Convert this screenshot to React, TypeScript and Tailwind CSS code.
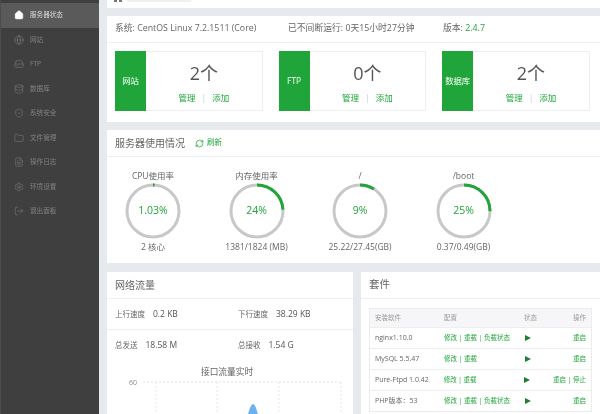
import React from 'react'
import { Home, Globe, HardDrive, Database, ShieldCheck, Folder, FileText, Settings, LogOut, RefreshCw } from 'lucide-react'

const font = 'font-["Open_Sans","Noto_Sans_CJK_SC",sans-serif]'

const MENU = [
  { label: '服务器状态', icon: Home, active: true },
  { label: '网站', icon: Globe },
  { label: 'FTP', icon: HardDrive },
  { label: '数据库', icon: Database },
  { label: '系统安全', icon: ShieldCheck },
  { label: '文件管理', icon: Folder },
  { label: '操作日志', icon: FileText },
  { label: '环境设置', icon: Settings },
  { label: '退出面板', icon: LogOut },
]

const BOXES = [
  { name: '网站', count: '2个' },
  { name: 'FTP', count: '0个' },
  { name: '数据库', count: '2个' },
]

const GAUGES = [
  { title: 'CPU使用率', value: '1.03%', pct: 1.03, foot: '2 核心' },
  { title: '内存使用率', value: '24%', pct: 24, foot: '1381/1824 (MB)' },
  { title: '/', value: '9%', pct: 9, foot: '25.22/27.45(GB)' },
  { title: '/boot', value: '25%', pct: 25, foot: '0.37/0.49(GB)' },
]

const SOFTWARE = [
  { name: 'nginx1.10.0', conf: '修改 | 重载 | 负载状态', op: '重启' },
  { name: 'MySQL 5.5.47', conf: '修改 | 重载', op: '重启' },
  { name: 'Pure-Ftpd 1.0.42', conf: '修改 | 重载', op: '重启 | 停止' },
  { name: 'PHP版本：53', conf: '修改 | 重载 | 负载状态', op: '重启' },
]

function Gauge({ title, value, pct, foot }: { title: string; value: string; pct: number; foot: string }) {
  const r = 26
  const c = 2 * Math.PI * r
  return (
    <div className="w-[92px] flex flex-col items-center text-[#666]">
      <div className="text-[8.5px] leading-[12px] mb-[1px] whitespace-nowrap">{title}</div>
      <div className="relative w-[56px] h-[56px]">
        <svg viewBox="0 0 56 56" className="w-[56px] h-[56px]">
          <circle cx="28" cy="28" r={r} fill="none" stroke="#c8c8c8" strokeWidth="3" />
          <circle
            cx="28"
            cy="28"
            r={r}
            fill="none"
            stroke="#20a53a"
            strokeWidth="3"
            strokeDasharray={`${(c * pct) / 100} ${c}`}
            transform="rotate(-90 28 28)"
          />
        </svg>
        <div className="absolute inset-0 flex items-center justify-center text-[10.5px] text-[#20a53a]">{value}</div>
      </div>
      <div className="text-[8.5px] leading-[12px] mt-[2px] whitespace-nowrap">{foot}</div>
    </div>
  )
}

function TrafficChart() {
  return (
    <svg viewBox="0 0 246 42" className="w-[246px] h-[42px] block">
      <text x="30" y="6.5" textAnchor="end" fontSize="7" fill="#888">60</text>
      <path d="M36 4H235" stroke="#ddd" strokeWidth="0.8" strokeDasharray="2 2" />
      <path d="M49 4V42M110 4V42M172 4V42M234 4V42" stroke="#e2e2e2" strokeWidth="0.8" strokeDasharray="2 2" />
      <path d="M139 42C141 38 143 26 146 26C149 26 151 38 153 42Z" fill="#6db1ee" />
    </svg>
  )
}

export default function App() {
  return (
    <div className={`${font} flex w-[600px] h-[414px] overflow-hidden bg-[#e6eaee] text-[#666] blur-[0.35px]`}>
      <aside className="w-[99px] shrink-0 bg-[#3f3f3f] pt-[3px] border-l border-[#4c4c4c]">
        {MENU.map((m) => {
          const Icon = m.icon
          return (
            <div
              key={m.label}
              className={`h-[24.5px] flex items-center pl-[13px] gap-[6px] text-[6.6px] ${m.active ? 'bg-[#5a5a5a] text-[#ddd]' : 'text-[#828282]'}`}
            >
              <Icon
                size={10}
                strokeWidth={1.5}
                fill={m.active ? 'currentColor' : 'none'}
                className={m.active ? 'text-white' : 'text-[#777]'}
              />
              <span>{m.label}</span>
            </div>
          )
        })}
      </aside>

      <main className="flex-1 pl-[8px] min-w-0">
        {/* breadcrumb bar, only its last pixels are in view */}
        <div className="h-[8px] bg-white mb-[8px] flex items-start pl-[7px] gap-[2px]">
          <div className="w-[3px] h-[1.5px] bg-[#777]" />
          <div className="w-[3px] h-[1.5px] bg-[#777]" />
          <div className="ml-[3px] w-[64px] h-[1.5px] bg-[#f0f0f0]" />
        </div>

        <section className="h-[106px] bg-white mb-[8px]">
          <div className="h-[27px] flex items-center pl-[8px] border-b border-[#eee] text-[8.8px]">
            <span className="w-[173px]">系统: CentOS Linux 7.2.1511 (Core)</span>
            <span className="w-[155px]">已不间断运行: 0天15小时27分钟</span>
            <span>版本: <span className="text-[#20a53a]">2.4.7</span></span>
          </div>
          <div className="flex gap-[16px] pl-[8px] pt-[8px]">
            {BOXES.map((b) => (
              <div key={b.name} className="w-[147.6px] h-[60px] flex border border-[#eee]">
                <div className="w-[31px] -my-px -ml-px bg-[#20a53a] text-white text-[8.4px] flex items-center justify-center whitespace-nowrap">
                  {b.name}
                </div>
                <div className="flex-1 flex flex-col items-center pt-[9px]">
                  <div className="text-[18px] leading-[24px] text-[#555]">{b.count}</div>
                  <div className="text-[8.5px] leading-[12px] mt-[7px] text-[#20a53a]">
                    管理<span className="text-[#ccc] mx-[6px]">|</span>添加
                  </div>
                </div>
              </div>
            ))}
          </div>
        </section>

        <section className="h-[133px] bg-white mb-[9px]">
          <div className="h-[27px] flex items-center pl-[8px] border-b border-[#eee] text-[10px]">
            <span>服务器使用情况</span>
            <span className="ml-[10px] flex items-center gap-[3px] text-[7.5px] text-[#20a53a]">
              <RefreshCw size={9} />
              刷新
            </span>
          </div>
          <div className="flex gap-[11.5px] pt-[13px]">
            {GAUGES.map((g) => (
              <Gauge key={g.title} {...g} />
            ))}
          </div>
        </section>

        <div className="flex gap-[8px]">
          <section className="w-[246px] h-[150px] bg-white">
            <div className="h-[27px] flex items-center pl-[8px] border-b border-[#eee] text-[10px]">网络流量</div>
            <div className="h-[31px] flex items-center pl-[8px] border-b border-[#eee] text-[7.5px]">
              <span className="w-[123px]">上行速度<span className="ml-[8px] text-[8.5px] text-[#555]">0.2 KB</span></span>
              <span>下行速度<span className="ml-[8px] text-[8.5px] text-[#555]">38.29 KB</span></span>
            </div>
            <div className="h-[31px] flex items-center pl-[8px] text-[7.5px]">
              <span className="w-[123px]">总发送<span className="ml-[8px] text-[8.5px] text-[#555]">18.58 M</span></span>
              <span>总接收<span className="ml-[8px] text-[8.5px] text-[#555]">1.54 G</span></span>
            </div>
            <div className="text-center text-[8.7px] leading-[12px] mt-[5px] pr-[6px]">接口流量实时</div>
            <TrafficChart />
          </section>

          <section className="w-[239px] h-[150px] bg-white">
            <div className="h-[27px] flex items-center pl-[8px] border-b border-[#eee] text-[10.5px]">套件</div>
            <div className="mx-[8px] mt-[9px] border border-[#ececec] text-[7px]">
              <div className="h-[18px] flex items-center bg-[#f6f6f8] text-[#999] px-[5px] text-[6.5px]">
                <span className="w-[69px]">安装软件</span>
                <span className="w-[80px]">配置</span>
                <span className="w-[30px]">状态</span>
                <span className="flex-1 text-right">操作</span>
              </div>
              {SOFTWARE.map((s) => (
                <div key={s.name} className="h-[21px] flex items-center border-t border-[#eee] px-[5px]">
                  <span className="w-[69px] whitespace-nowrap">{s.name}</span>
                  <span className="w-[80px] whitespace-nowrap text-[#20a53a] text-[6.5px]">{s.conf}</span>
                  <span className="w-[30px]">
                    <span className="block ml-[1px] w-0 h-0 border-y-[3px] border-y-transparent border-l-[6px] border-l-[#1d7f30]" />
                  </span>
                  <span className="flex-1 text-right whitespace-nowrap text-[#20a53a] text-[6.5px]">{s.op}</span>
                </div>
              ))}
            </div>
          </section>
        </div>
      </main>
    </div>
  )
}
